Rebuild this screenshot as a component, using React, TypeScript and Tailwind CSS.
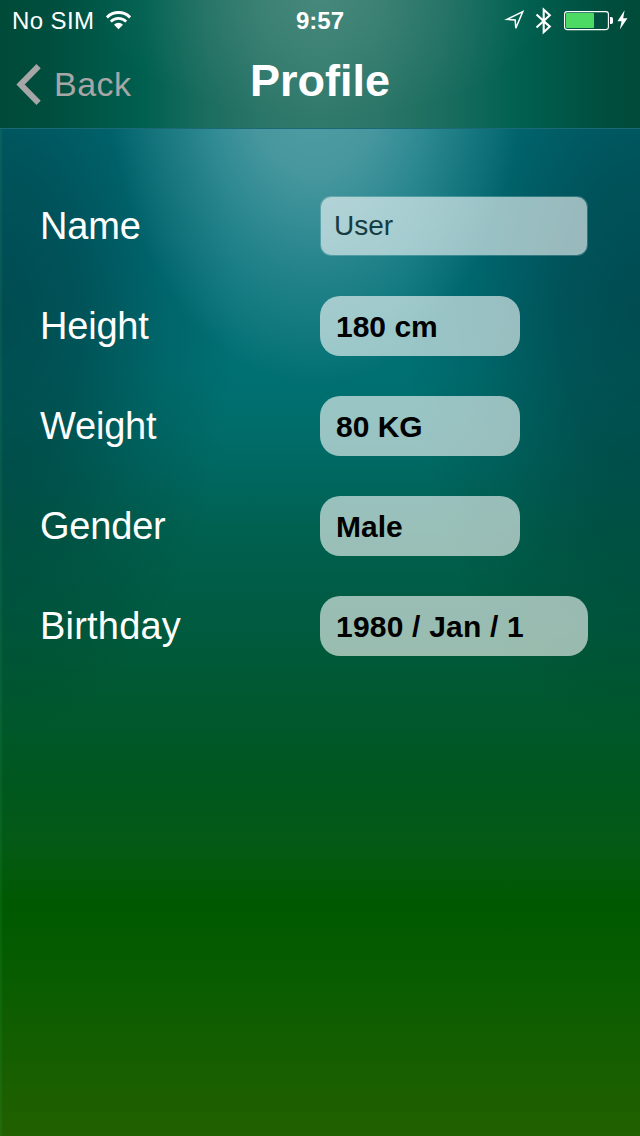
import { clsx } from 'clsx'

type Field = {
  label: string
  value: string
  wide?: boolean
}

const FIELDS: Field[] = [
  { label: 'Height', value: '180 cm' },
  { label: 'Weight', value: '80 KG' },
  { label: 'Gender', value: 'Male' },
  { label: 'Birthday', value: '1980 / Jan / 1', wide: true },
]

function StatusBar() {
  return (
    <div className="grid h-10 grid-cols-3 items-center pt-[2px] text-[24px] leading-[38px]">
      <div className="flex items-center gap-3 pl-3">
        <span className="tracking-[0.4px]">No SIM</span>
        <svg className="mb-[2px] h-[19px] w-[25px]" viewBox="0 0 25 19" fill="none" stroke="currentColor">
          <path d="M0.9 6.4a16.4 16.4 0 0 1 23.2 0" strokeWidth="3" />
          <path d="M4.8 10.6a10.9 10.9 0 0 1 15.4 0" strokeWidth="2.6" />
          <path d="M12.5 18.2L8 13.7a6.4 6.4 0 0 1 9 0z" fill="currentColor" stroke="none" />
        </svg>
      </div>

      <span className="text-center font-bold">9:57</span>

      <div className="flex items-center justify-end pr-3">
        <svg className="mr-[10px] mb-[1px] h-[21px] w-[21px]" viewBox="0 0 21 21" fill="none" stroke="currentColor" strokeWidth="1.5">
          <path d="M18.8 1.6L3 9.4L11.2 9.9L11.8 18.2z" />
        </svg>
        <svg className="mr-[12px] mb-[1px] h-[28px] w-[17px]" viewBox="0 0 17 28" fill="none" stroke="currentColor" strokeWidth="2.1">
          <path d="M1.5 7.5L14.8 19.6L8.7 25.2V2.6L14.8 8.2L1.5 20.4" />
        </svg>
        <svg className="h-[20px] w-[49px]" viewBox="0 0 49 20" fill="none">
          <rect x="0.6" y="0.6" width="43.8" height="18" rx="2.5" stroke="currentColor" strokeWidth="1.1" />
          <rect x="2" y="2" width="28" height="15" rx="0.8" fill="#4cd964" />
          <path d="M46 6h1.2a1.8 1.8 0 0 1 1.8 1.8v3.4a1.8 1.8 0 0 1-1.8 1.8H46z" fill="currentColor" />
        </svg>
        <svg className="mb-[2px] ml-[4px] h-[20px] w-[11px]" viewBox="0 0 11 20" fill="currentColor">
          <path d="M7.6 0.3L0.5 11.2H4.6L2.8 19.4L10.5 8.2H6.2z" />
        </svg>
      </div>
    </div>
  )
}

function NavBar() {
  return (
    <div className="grid h-[88px] grid-cols-3">
      <button className="flex items-center gap-[13px] pl-[16px] text-left text-[34px] text-[#a6a6a6]">
        <svg className="h-[41px] w-[25px]" viewBox="0 0 25 41" fill="none" stroke="currentColor" strokeWidth="6">
          <path d="M22.6 2.2L4.6 20.5L22.6 38.8" />
        </svg>
        <span className="tracking-[0.5px]">Back</span>
      </button>
      <h1 className="text-center text-[45px] leading-[82px] font-bold">Profile</h1>
    </div>
  )
}

export default function App() {
  return (
    // glow from the top, shaded sides, then the teal to green sweep
    <div className="flex h-[1136px] w-[640px] flex-col overflow-hidden bg-[radial-gradient(209px_325px_at_315px_60px,rgba(255,255,255,0.34)_0%,rgba(255,255,255,0.28)_35%,rgba(255,255,255,0.14)_65%,rgba(255,255,255,0.05)_88%,transparent_100%),radial-gradient(235px_430px_at_0px_310px,rgba(0,0,0,0.32)_0%,rgba(0,0,0,0.25)_35%,rgba(0,0,0,0.09)_70%,transparent_100%),radial-gradient(235px_430px_at_640px_310px,rgba(0,0,0,0.32)_0%,rgba(0,0,0,0.25)_35%,rgba(0,0,0,0.09)_70%,transparent_100%),linear-gradient(180deg,#006f7a_0px,#006f79_250px,#007073_370px,#006d6b_425px,#006760_475px,#006150_530px,#005b42_610px,#005830_700px,#00571f_780px,#045a15_845px,#005900_905px,#075c00_970px,#145e00_1050px,#226000_1136px)] font-['Liberation_Sans',Arial,sans-serif] text-white">
      <header className="h-32 bg-[radial-gradient(230px_120px_at_320px_0px,rgba(255,255,255,0.11),transparent),linear-gradient(90deg,#004a38_0px,#004e3e_50px,#006050_145px,#1c6e60_210px,#2b7668_265px,#307a6c_320px,#2b7668_375px,#1c6e60_440px,#006050_520px,#004e3e_605px,#004a38_640px)]">
        <StatusBar />
        <NavBar />
      </header>

      <main className="flex flex-1 flex-col gap-10 border-t border-[#1b6876] bg-[linear-gradient(90deg,rgba(60,190,110,0.14),transparent_3px)] pt-[67px] pl-10">
        <div className="flex h-[60px] items-center">
          <label className="w-[280px] pb-[1px] text-[38px] leading-[58px] tracking-[-0.2px]" htmlFor="name">Name</label>
          <input
            id="name"
            defaultValue="User"
            className="h-[60px] w-[268px] rounded-[11px] border border-white/20 bg-white/60 bg-clip-padding px-[13px] text-[28px] text-[#143c42] outline-none"
          />
        </div>

        {FIELDS.map(f => (
          <div key={f.label} className="flex h-[60px] items-center">
            <span className={clsx('w-[280px] pb-[1px] text-[38px] leading-[58px]', f.wide ? 'tracking-[0.2px]' : 'tracking-[-0.2px]')}>
              {f.label}
            </span>
            <button
              className={clsx(
                'h-[60px] rounded-[20px] bg-white/60 pl-4 text-left text-[30px] font-bold text-black',
                f.wide ? 'w-[268px] tracking-[0.2px]' : 'w-[200px]'
              )}>
              {f.value}
            </button>
          </div>
        ))}
      </main>
    </div>
  )
}
